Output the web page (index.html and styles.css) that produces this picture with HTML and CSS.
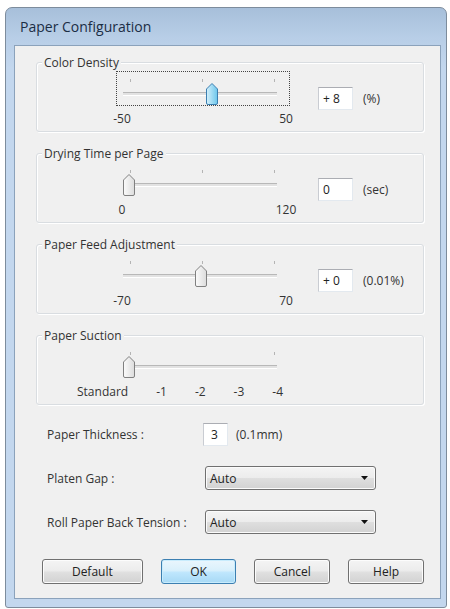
FILE: index.html
```html
<!DOCTYPE html>
<html lang="en">
  <head>
    <meta charset="UTF-8" />
    <title>Paper Configuration</title>
    <link rel="stylesheet" href="styles.css">
  </head>
  <body>
    <svg class="defs" width="0" height="0">
      <defs>
        <linearGradient id="thumb-grey" x1="0" y1="0" x2="1" y2="0">
          <stop offset="0" stop-color="#fbfbfb" />
          <stop offset="1" stop-color="#dcdcdc" />
        </linearGradient>
        <linearGradient id="thumb-blue" x1="0" y1="0" x2="1" y2="0">
          <stop offset="0" stop-color="#d4f0fb" />
          <stop offset="1" stop-color="#6cc6ec" />
        </linearGradient>
      </defs>
    </svg>

    <div class="window">
      <div class="titlebar">Paper Configuration</div>

      <div class="client">
        <div class="group">
          <div class="group-title">Color Density</div>
          <div class="slider-row">
            <div class="slider focused">
              <div class="scale">
                <div class="ticks"><span></span><span></span><span></span></div>
                <div class="track"></div>
                <svg class="thumb" style="left: 90px" width="12" height="22" viewBox="0 0 12 22">
                  <path d="M0.5 6 L6 0.5 L11.5 6 V20 Q11.5 21.5 10 21.5 H2 Q0.5 21.5 0.5 20 Z" fill="url(#thumb-blue)" stroke="#3c7fb1" />
                </svg>
              </div>
              <div class="scale-labels"><span>-50</span><span>50</span></div>
            </div>
            <div class="value-box">+ 8</div>
            <div class="unit">(%)</div>
          </div>
        </div>

        <div class="group">
          <div class="group-title">Drying Time per Page</div>
          <div class="slider-row">
            <div class="slider">
              <div class="scale">
                <div class="ticks"><span></span><span></span><span></span></div>
                <div class="track"></div>
                <svg class="thumb" style="left: 7px" width="12" height="22" viewBox="0 0 12 22">
                  <path d="M0.5 6 L6 0.5 L11.5 6 V20 Q11.5 21.5 10 21.5 H2 Q0.5 21.5 0.5 20 Z" fill="url(#thumb-grey)" stroke="#808080" />
                </svg>
              </div>
              <div class="scale-labels"><span>0</span><span>120</span></div>
            </div>
            <div class="value-box">0</div>
            <div class="unit">(sec)</div>
          </div>
        </div>

        <div class="group">
          <div class="group-title">Paper Feed Adjustment</div>
          <div class="slider-row">
            <div class="slider">
              <div class="scale">
                <div class="ticks"><span></span><span></span><span></span></div>
                <div class="track"></div>
                <svg class="thumb" style="left: 79px" width="12" height="22" viewBox="0 0 12 22">
                  <path d="M0.5 6 L6 0.5 L11.5 6 V20 Q11.5 21.5 10 21.5 H2 Q0.5 21.5 0.5 20 Z" fill="url(#thumb-grey)" stroke="#808080" />
                </svg>
              </div>
              <div class="scale-labels"><span>-70</span><span>70</span></div>
            </div>
            <div class="value-box">+ 0</div>
            <div class="unit">(0.01%)</div>
          </div>
        </div>

        <div class="group">
          <div class="group-title">Paper Suction</div>
          <div class="slider-row">
            <div class="slider">
              <div class="scale">
                <div class="ticks"><span></span><span class="hidden"></span><span></span></div>
                <div class="track"></div>
                <svg class="thumb" style="left: 7px" width="12" height="22" viewBox="0 0 12 22">
                  <path d="M0.5 6 L6 0.5 L11.5 6 V20 Q11.5 21.5 10 21.5 H2 Q0.5 21.5 0.5 20 Z" fill="url(#thumb-grey)" stroke="#808080" />
                </svg>
              </div>
              <div class="scale-labels steps">
                <span>Standard</span><span>-1</span><span>-2</span><span>-3</span><span>-4</span>
              </div>
            </div>
          </div>
        </div>

        <div class="fields">
          <div class="field-row">
            <label>Paper Thickness :</label>
            <div class="value-box small">3</div>
            <div class="unit">(0.1mm)</div>
          </div>
          <div class="field-row">
            <label>Platen Gap :</label>
            <div class="select">
              <span>Auto</span>
              <svg width="7" height="4" viewBox="0 0 7 4"><path d="M0 0 H7 L3.5 4 Z" fill="#111" /></svg>
            </div>
          </div>
          <div class="field-row">
            <label>Roll Paper Back Tension :</label>
            <div class="select">
              <span>Auto</span>
              <svg width="7" height="4" viewBox="0 0 7 4"><path d="M0 0 H7 L3.5 4 Z" fill="#111" /></svg>
            </div>
          </div>
        </div>

        <div class="buttons">
          <button class="btn wide">Default</button>
          <button class="btn default">OK</button>
          <button class="btn">Cancel</button>
          <button class="btn">Help</button>
        </div>
      </div>
    </div>
  </body>
</html>
```

FILE: styles.css
```css
body {
  margin: 0;
  background: #fff;
  font-family: "Open Sans", "Liberation Sans", sans-serif;
  font-size: 12px;
  color: #333;
}

.defs {
  display: block;
  width: 0;
  height: 0;
  overflow: hidden;
}

/* marco de la ventana */
.window {
  width: 442px;
  height: 601px;
  box-sizing: border-box;
  margin: 7px 0 0 5px;
  padding: 0 5px 8px 8px;
  border: 1px solid #7d8c9c;
  border-radius: 7px 7px 3px 3px;
  background: linear-gradient(to bottom, #a7bfda 0, #b8cee7 30px, #c3d7ee 60px, #c3d7ee);
  display: flex;
  flex-direction: column;
}

.titlebar {
  flex: 0 0 37px;
  box-sizing: border-box;
  padding: 11px 0 0 6px;
  font-size: 14px;
  line-height: 16px;
  color: #1b2d44;
}

.client {
  flex: 1 1 auto;
  min-height: 0;
  background: #f0f0f0;
  border: 1px solid #8ba2bb;
  padding: 8px 16px 0 21px;
}

/* grupos */
.group {
  height: 70px;
  box-sizing: border-box;
  margin-top: 8px;
  border: 1px solid #d9dde1;
  border-radius: 3px;
  box-shadow: inset 1px 1px 0 #fff, 1px 1px 0 #fff;
}
.group + .group {
  margin-top: 21px;
}
.group-title {
  width: fit-content;
  height: 15px;
  margin: -8px 0 0 5px;
  padding: 0 2px;
  line-height: 15px;
  background: #f0f0f0;
}

.slider-row {
  display: flex;
  align-items: flex-start;
  height: 55px;
  margin-top: 1px;
}
.slider {
  width: 174px;
  margin-left: 79px;
}
.scale {
  position: relative;
  height: 35px;
}
.slider.focused .scale {
  outline: 1px dotted #444;
  outline-offset: -1px;
}
.ticks {
  display: flex;
  justify-content: space-between;
  height: 3px;
  padding: 8px 15px 0 14px;
}
.ticks span {
  width: 1px;
  height: 3px;
  background: #b4b4b4;
}
.ticks span.hidden {
  visibility: hidden;
}
.track {
  height: 2px;
  margin: 10px 13px 0 7px;
  background: #e2e2e2;
  border-top: 1px solid #b8b8b8;
  border-bottom: 1px solid #fff;
}
.thumb {
  position: absolute;
  top: 12px;
  display: block;
}

.scale-labels {
  display: flex;
  justify-content: space-between;
  width: 194px;
  height: 15px;
  margin: 5px 0 0 -9px;
  line-height: 15px;
}
.scale-labels span {
  width: 30px;
  text-align: center;
}
.scale-labels.steps {
  justify-content: flex-start;
  gap: 28px;
  width: auto;
  margin-left: -39px;
}
.scale-labels.steps span {
  width: auto;
}

.value-box {
  width: 35px;
  height: 23px;
  box-sizing: border-box;
  margin: 16px 0 0 28px;
  padding-left: 4px;
  line-height: 21px;
  background: #fff;
  border: 1px solid #e3e9ef;
  border-top-color: #abadb3;
  border-left-color: #c9ccd2;
  color: #222;
}
.unit {
  margin: 16px 0 0 10px;
  line-height: 23px;
}

/* filas de abajo */
.fields {
  display: flex;
  flex-direction: column;
  gap: 20px;
  margin-top: 17px;
  padding-left: 11px;
}
.field-row {
  display: flex;
  align-items: center;
  height: 24px;
}
.field-row label {
  width: 156px;
}
.field-row .value-box {
  width: 25px;
  margin: 0;
  padding-left: 7px;
}
.field-row .unit {
  margin: 0 0 0 8px;
}
.select {
  width: 171px;
  height: 24px;
  box-sizing: border-box;
  margin-left: 2px;
  padding: 0 7px 0 4px;
  display: flex;
  align-items: center;
  justify-content: space-between;
  border: 1px solid #707070;
  border-radius: 3px;
  background: linear-gradient(to bottom, #f4f4f4, #ececec 50%, #dfdfdf 50%, #d2d2d2);
  box-shadow: inset 0 0 0 1px #fbfbfb;
  color: #222;
}

.buttons {
  display: flex;
  gap: 18px;
  margin: 25px 0 0 6px;
}
.btn {
  width: 76px;
  height: 25px;
  padding: 0;
  font-family: inherit;
  font-size: 12px;
  color: #222;
  border: 1px solid #707070;
  border-radius: 3px;
  background: linear-gradient(to bottom, #f4f4f4, #ececec 45%, #dfdfdf 55%, #d2d2d2);
  box-shadow: inset 0 0 0 1px #fcfcfc;
}
.btn.wide {
  width: 101px;
}
.btn.default {
  border-color: #3c7fb1;
  background: linear-gradient(to bottom, #eaf6fd, #d9f0fc 45%, #bee6fd 55%, #a7d9f5);
  box-shadow: inset 0 0 0 1px #c8ecfd;
}
```
